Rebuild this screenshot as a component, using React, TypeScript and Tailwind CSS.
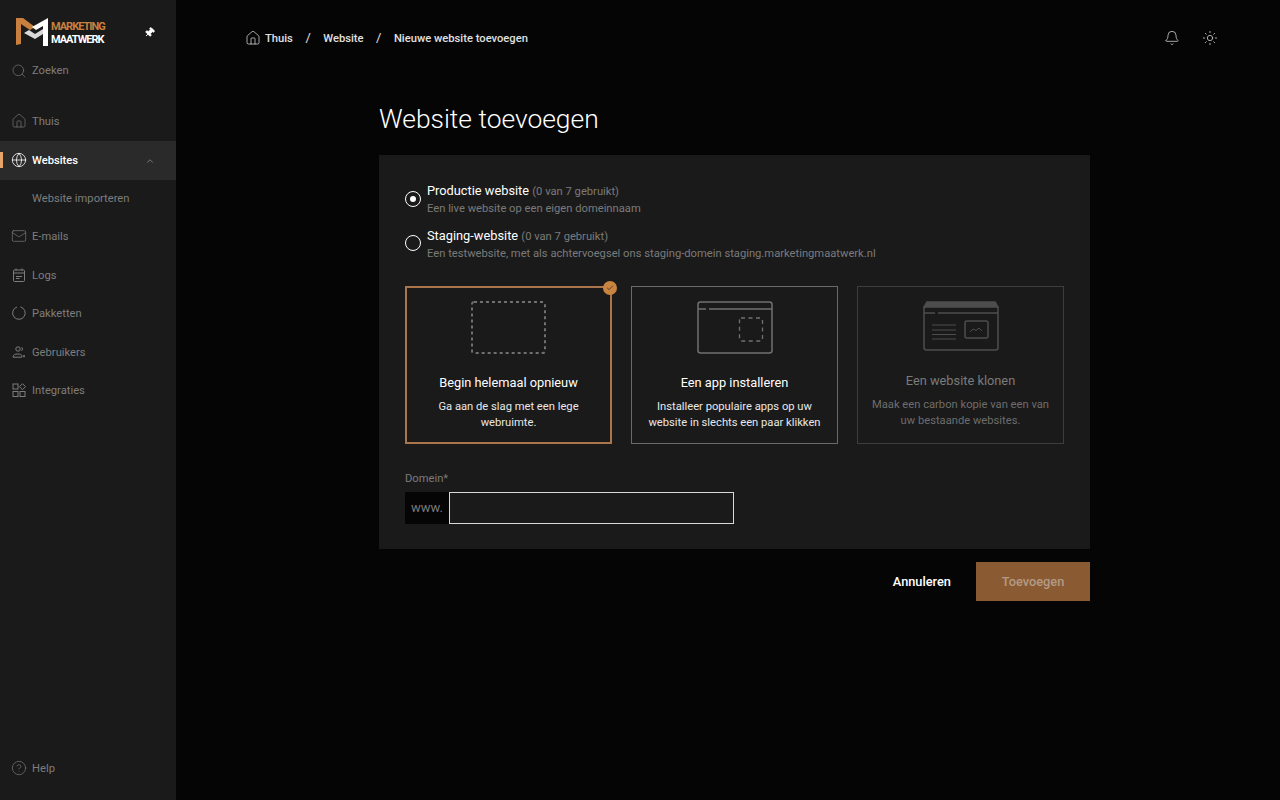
import { Bell, Check, ChevronUp, CircleHelp, Globe, House, Mail, Pin, Search, Sun } from 'lucide-react';
import type { ReactNode } from 'react';

function Logo() {
  return (
    <div className="flex items-center">
      <svg width="34" height="30" viewBox="0 0 34 30" className="ml-[15px] shrink-0">
        <path d="M1 1 L8 1 L20 10 L15 13 L6 7 L6 27 L1 28 Z" fill="#c9803f" />
        <path d="M9 16 L14 13 L20 17 L28 12 L28 17 L20 22 Z" fill="#d9d9d9" />
        <path d="M33 1 L33 29 L28 29 L28 9 L21 13 L17 10 Z" fill="#ffffff" />
      </svg>
      <div className="ml-[2px] flex flex-col pt-[2px] text-[11px] font-bold leading-[13px] tracking-[-1px]">
        <span className="text-[#c9803f]">MARKETING</span>
        <span className="text-white">MAATWERK</span>
      </div>
    </div>
  );
}

function CalendarIcon() {
  return (
    <svg width="14" height="14" viewBox="0 0 14 14" fill="none" stroke="currentColor" strokeWidth="1">
      <rect x="1.5" y="2" width="11" height="11.5" rx="1" />
      <path d="M1.5 5h11M4 .5v2M10 .5v2M4 8.5h6M4 10.5h3.5" />
    </svg>
  );
}

function RingIcon() {
  return (
    <svg width="14" height="14" viewBox="0 0 14 14" fill="none" stroke="currentColor" strokeWidth="1">
      <path d="M8.5.9A6.3 6.3 0 1 1 5 1" />
    </svg>
  );
}

function UsersIcon() {
  return (
    <svg width="14" height="14" viewBox="0 0 14 14" fill="none" stroke="currentColor" strokeWidth="1">
      <circle cx="6" cy="4" r="2.2" />
      <path d="M9.5 2.2a2.2 2.2 0 0 1 0 3.6M1 12.2c0-2.4 2-3.2 4.8-3.2 2 0 3.4.4 4 1.4v1.8z" />
      <path d="M12 10v2.2" strokeWidth="1.5" />
    </svg>
  );
}

function GridIcon() {
  return (
    <svg width="14" height="14" viewBox="0 0 14 14" fill="none" stroke="currentColor" strokeWidth="1">
      <rect x="1" y="1" width="5" height="5" />
      <path d="M10.5.7l3 3-3 3-3-3z" />
      <rect x="1" y="8.5" width="5" height="5" />
      <rect x="8" y="8.5" width="5" height="5" />
    </svg>
  );
}

function NavItem({ icon, label, active, trailing }: { icon?: ReactNode; label: string; active?: boolean; trailing?: ReactNode }) {
  return (
    <div
      className={`relative flex h-[38.4px] items-center gap-[5px] pl-[11px] text-[11.2px] ${
        active ? 'bg-[#2a2a2a] font-medium text-white' : 'text-[#7d7d7d]'
      }`}
    >
      {active && <span className="absolute left-0 top-[11px] h-[16px] w-[3px] bg-[#e8a56a]" />}
      <span className="mb-[2px] flex w-[16px] justify-center">{icon}</span>
      <span className="pt-[1px]">{label}</span>
      {trailing && <span className="ml-auto mr-[21px]">{trailing}</span>}
    </div>
  );
}

function Sidebar() {
  return (
    <aside className="flex h-[800px] w-[176px] shrink-0 flex-col bg-[#1a1a1a]">
      <div className="flex h-[61px] items-center justify-between pr-[21px] pt-[3px]">
        <Logo />
        <Pin size={11} fill="white" className="rotate-45 text-white" />
      </div>
      <div className="flex h-[19px] items-center gap-[5px] pl-[11px] text-[11.2px] text-[#7d7d7d]">
        <Search size={16} strokeWidth={1} />
        <span className="pt-[2px]">Zoeken</span>
      </div>
      <nav className="mt-[23px] flex flex-col">
        <NavItem icon={<House size={16} strokeWidth={1} />} label="Thuis" />
        <NavItem icon={<Globe size={16} strokeWidth={1.2} />} label="Websites" active trailing={<ChevronUp size={10} className="text-[#888]" />} />
        <div className="flex h-[38.4px] items-center pl-[32px] text-[11.2px] text-[#7d7d7d]">Website importeren</div>
        <NavItem icon={<Mail size={16} strokeWidth={1} />} label="E-mails" />
        <NavItem icon={<CalendarIcon />} label="Logs" />
        <NavItem icon={<RingIcon />} label="Pakketten" />
        <NavItem icon={<UsersIcon />} label="Gebruikers" />
        <NavItem icon={<GridIcon />} label="Integraties" />
      </nav>
      <div className="mt-auto mb-[22px] flex h-[20px] items-center gap-[5px] pl-[11px] text-[11.2px] text-[#7d7d7d]">
        <CircleHelp size={16} strokeWidth={1} />
        <span className="pt-[2px]">Help</span>
      </div>
    </aside>
  );
}

function Breadcrumbs() {
  return (
    <div className="flex items-center text-[11.2px] font-medium text-[#e0e0e0]">
      <House size={16} strokeWidth={1.1} />
      <span className="ml-[4px] pt-[2px]">Thuis</span>
      <span className="mx-[12.5px] text-[13px] font-normal">/</span>
      <span className="pt-[2px]">Website</span>
      <span className="mx-[12.5px] text-[13px] font-normal">/</span>
      <span className="pt-[2px]">Nieuwe website toevoegen</span>
    </div>
  );
}

function RadioOption({ title, usage, description, checked }: { title: string; usage: string; description: string; checked?: boolean }) {
  return (
    <div className="flex items-center gap-[6px]">
      <span className={`${checked ? 'mb-[2px]' : 'mb-[3px]'} flex h-[16px] w-[16px] items-center justify-center rounded-full border-[1.5px] border-white`}>
        {checked && <span className="h-[6px] w-[6px] rounded-full bg-white" />}
      </span>
      <div>
        <div className="text-[12.8px] leading-[18px] text-white">
          {title} <span className="text-[11.2px] text-[#7a7a7a]">{usage}</span>
        </div>
        <div className="text-[11.2px] leading-[16px] text-[#7a7a7a]">{description}</div>
      </div>
    </div>
  );
}

function BlankArt() {
  return (
    <svg width="76" height="54" viewBox="0 0 76 54" fill="none">
      <rect x="1" y="1" width="73" height="51" rx="2" stroke="#707070" strokeWidth="2" strokeDasharray="3 3" />
    </svg>
  );
}

function AppArt() {
  return (
    <svg width="76" height="54" viewBox="0 0 76 54" fill="none" stroke="#707070" strokeWidth="1.5">
      <rect x="1" y="1" width="74" height="51" rx="2.5" />
      <path d="M1 8h8M12 8h63" />
      <rect x="42.5" y="17" width="23" height="23" rx="1.5" strokeWidth="1.3" strokeDasharray="4 3.5" />
    </svg>
  );
}

function CloneArt() {
  return (
    <svg width="76" height="50" viewBox="0 0 76 50" fill="none" stroke="#4d4d4d" strokeWidth="1.5">
      <path d="M4 1h68l3 5H1z" fill="#4d4d4d" />
      <rect x="1" y="5" width="74" height="44" rx="2.5" />
      <path d="M1 12h11M15 12h60" />
      <path d="M9 24h24M9 29h24M9 33.5h24M9 38h24" strokeWidth="1" />
      <rect x="42" y="20" width="23" height="17" rx="2" />
      <path d="M47 31l3-3 3 1.5 3-2.5 3 3" strokeWidth="1" />
    </svg>
  );
}

function OptionCard({
  art,
  title,
  text,
  state,
}: {
  art: ReactNode;
  title: string;
  text: ReactNode;
  state: 'selected' | 'normal' | 'disabled';
}) {
  const frame =
    state === 'selected'
      ? 'border-2 border-[#ab754b] pt-[13px]'
      : state === 'normal'
        ? 'border border-[#6a6a6a] pt-[14px]'
        : 'border border-[#3d3d3d] pt-[14px]';
  return (
    <div className={`relative flex h-[158px] w-[207px] flex-col items-center ${frame}`}>
      {art}
      <div className={`${state === 'disabled' ? 'mt-[20px] text-[#7b7b7b]' : 'mt-[18px] text-white'} text-[12.8px] leading-[20px]`}>
        {title}
      </div>
      <div className={`${state === 'disabled' ? 'text-[#6d6d6d]' : 'text-[#e8e8e8]'} mt-[6px] text-center text-[11.2px] leading-[16px]`}>
        {text}
      </div>
      {state === 'selected' && (
        <span className="absolute -right-[7px] -top-[7px] flex h-[14px] w-[14px] items-center justify-center rounded-full bg-[#c9843f]">
          <Check size={8} strokeWidth={2} className="text-[#222]" />
        </span>
      )}
    </div>
  );
}

export default function App() {
  return (
    <div className="flex h-[800px] w-[1280px] overflow-hidden bg-[#050505] font-['Roboto',sans-serif]">
      <Sidebar />
      <main className="flex-1">
        <header className="flex h-[76px] items-center justify-between pl-[69px] pr-[62px]">
          <Breadcrumbs />
          <div className="flex items-center gap-[22px] text-[#cfcfcf]">
            <Bell size={16} strokeWidth={1.2} />
            <Sun size={16} strokeWidth={1.2} />
          </div>
        </header>
        <div className="ml-[203px] w-[711px]">
          <h1 className="mt-[25px] text-[26.4px] font-light leading-[36px] text-white">Website toevoegen</h1>
          <section className="mt-[18px] h-[394px] bg-[#1a1a1a] px-[26px] pt-[27px]">
            <div className="flex flex-col gap-[10px]">
              <RadioOption title="Productie website" usage="(0 van 7 gebruikt)" description="Een live website op een eigen domeinnaam" checked />
              <RadioOption
                title="Staging-website"
                usage="(0 van 7 gebruikt)"
                description="Een testwebsite, met als achtervoegsel ons staging-domein staging.marketingmaatwerk.nl"
              />
            </div>
            <div className="mt-[24px] flex justify-between">
              <OptionCard
                state="selected"
                art={<BlankArt />}
                title="Begin helemaal opnieuw"
                text={<>Ga aan de slag met een lege<br />webruimte.</>}
              />
              <OptionCard
                state="normal"
                art={<AppArt />}
                title="Een app installeren"
                text={<>Installeer populaire apps op uw<br />website in slechts een paar klikken</>}
              />
              <OptionCard
                state="disabled"
                art={<CloneArt />}
                title="Een website klonen"
                text={<>Maak een carbon kopie van een van<br />uw bestaande websites.</>}
              />
            </div>
            <div className="mt-[27px] text-[11.2px] leading-[16px] text-[#7a7a7a]">Domein*</div>
            <div className="mt-[5px] flex h-[32px]">
              <span className="flex w-[44px] items-center justify-center bg-[#050505] text-[13px] text-[#7a7a7a]">www.</span>
              <input className="h-[32px] w-[285px] border border-[#d8d8d8] bg-transparent outline-none" />
            </div>
          </section>
          <div className="mt-[13px] flex items-center justify-end">
            <span className="mr-[25px] text-[12.8px] font-medium text-white">Annuleren</span>
            <span className="flex h-[39px] w-[114px] items-center justify-center bg-[#8a5a33] text-[12.8px] font-medium text-[#b49a84]">
              Toevoegen
            </span>
          </div>
        </div>
      </main>
    </div>
  );
}
